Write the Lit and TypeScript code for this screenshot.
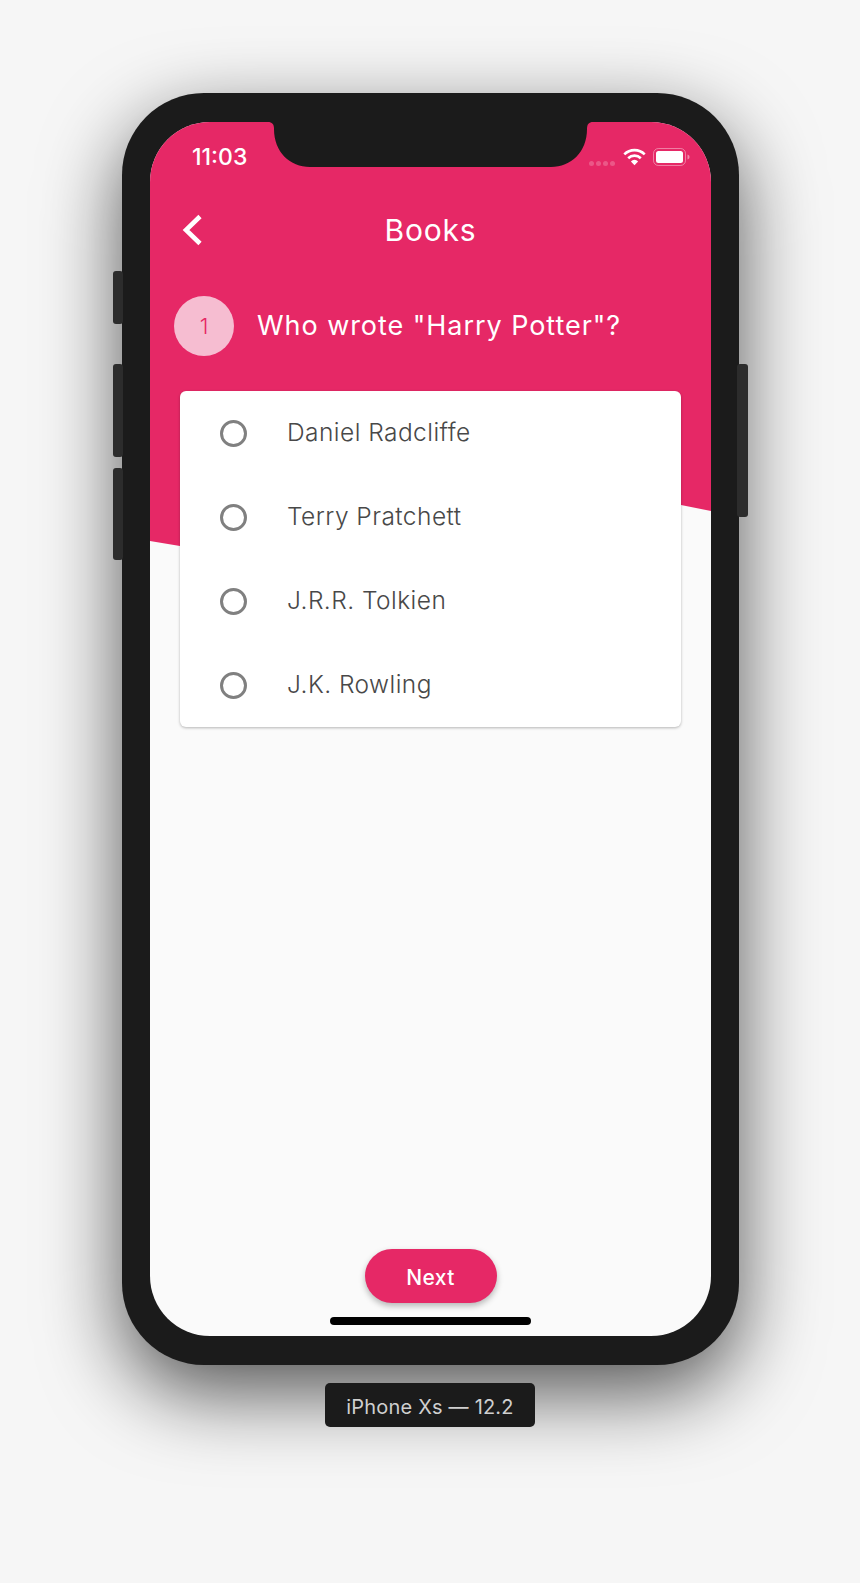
import { LitElement, html, css } from "lit";
import { customElement, state } from "lit/decorators.js";

const OPTIONS = ["Daniel Radcliffe", "Terry Pratchett", "J.R.R. Tolkien", "J.K. Rowling"];

@customElement("app-root")
export class AppRoot extends LitElement {
  @state() private selected = -1;

  static styles = css`
    :host {
      display: block;
      width: 860px;
      height: 1583px;
      background: #f6f6f6;
      overflow: hidden;
      font-family: Inter, "Liberation Sans", sans-serif;
    }
    .page {
      display: flex;
      flex-direction: column;
      align-items: flex-start;
      padding-top: 93px;
    }
    .phone {
      position: relative;
      box-sizing: border-box;
      width: 617px;
      height: 1272px;
      margin-left: 122px;
      padding: 29px 28px;
      background: #1b1b1b;
      border-radius: 82px;
      box-shadow: 0 28px 80px rgba(0, 0, 0, 0.66);
    }
    .side {
      position: absolute;
      background: #2c2c2c;
      border-radius: 3px;
    }
    .side.l { left: -9px; width: 10px; }
    .side.r { right: -9px; width: 11px; top: 271px; height: 153px; }
    .s1 { top: 178px; height: 53px; }
    .s2 { top: 271px; height: 93px; }
    .s3 { top: 375px; height: 92px; }

    .screen {
      position: relative;
      height: 1214px;
      display: flex;
      flex-direction: column;
      overflow: hidden;
      background: #fafafa;
      border-radius: 60px;
    }
    .wave {
      position: absolute;
      inset: 0 0 auto 0;
      height: 430px;
      background: #e62866;
      clip-path: polygon(0 0, 100% 0, 100% 389px, 531px 383px, 30px 424px, 0 419px);
    }
    .notch {
      position: absolute;
      top: 0;
      left: 118px;
      display: block;
    }
    .status, .appbar, .question, .card, .spacer, .next, .home {
      position: relative;
    }
    .status {
      height: 70px;
      display: flex;
      align-items: center;
      justify-content: space-between;
      padding: 0 21px 0 42px;
      color: #fff;
      font-size: 23px;
      font-weight: 500;
    }
    .icons {
      display: flex;
      align-items: center;
      gap: 7px;
    }
    .dots {
      display: flex;
      gap: 2px;
      margin-top: 12px;
      margin-right: 1px;
    }
    .dots i {
      width: 5px;
      height: 5px;
      border-radius: 50%;
      background: rgba(255, 255, 255, 0.22);
    }
    .icons svg { display: block; }

    .appbar {
      height: 76px;
      display: flex;
      align-items: center;
      justify-content: center;
      color: #fff;
      font-size: 30px;
      font-weight: 400;
      letter-spacing: 0.8px;
    }
    .back {
      position: absolute;
      left: 31px;
      top: 22px;
      display: block;
    }
    .question {
      display: flex;
      align-items: center;
      gap: 23px;
      margin-top: 28px;
      padding-left: 24px;
      color: #fff;
      font-size: 27px;
      font-weight: 400;
      letter-spacing: 0.95px;
    }
    .question span { margin-top: -2px; }
    .badge {
      flex: none;
      width: 60px;
      height: 60px;
      display: flex;
      align-items: center;
      justify-content: center;
      border-radius: 50%;
      background: #f6bdd1;
      color: #e62866;
      font-size: 22px;
      font-weight: 300;
      letter-spacing: 0;
    }
    .card {
      margin: 35px 30px 0;
      background: #fff;
      border-radius: 6px;
      box-shadow: 0 1px 3px rgba(0, 0, 0, 0.28);
    }
    .row {
      height: 84px;
      display: flex;
      align-items: center;
      gap: 40px;
      padding-left: 40px;
      color: #484848;
      font-size: 24.5px;
      font-weight: 350;
      letter-spacing: 0.45px;
      cursor: pointer;
    }
    .row span { margin-top: -2px; }
    .radio {
      flex: none;
      box-sizing: border-box;
      width: 27px;
      height: 27px;
      border: 3px solid #808080;
      border-radius: 50%;
    }
    .row.on .radio {
      border-color: #e62866;
      box-shadow: inset 0 0 0 4px #fff;
      background: #e62866;
    }
    .spacer { flex: 1; }
    .next {
      align-self: center;
      width: 132px;
      height: 54px;
      padding: 3px 0 0;
      border: none;
      border-radius: 27px;
      background: #e62866;
      color: #fff;
      font-family: inherit;
      font-size: 21px;
      font-weight: 500;
      letter-spacing: 0.4px;
      box-shadow: 0 3px 6px rgba(0, 0, 0, 0.28);
    }
    .home {
      align-self: center;
      width: 201px;
      height: 8px;
      margin: 14px 0 11px;
      background: #000;
      border-radius: 4px;
    }
    .label {
      position: relative;
      box-sizing: border-box;
      width: 210px;
      height: 44px;
      margin: 18px 0 0 325px;
      padding-top: 3px;
      display: flex;
      align-items: center;
      justify-content: center;
      background: #1b1b1b;
      border-radius: 5px;
      color: #cfcfcf;
      font-size: 20px;
      letter-spacing: 0.2px;
    }
  `;

  render() {
    return html`
      <div class="page">
        <div class="phone">
          <div class="side l s1"></div>
          <div class="side l s2"></div>
          <div class="side l s3"></div>
          <div class="side r"></div>
          <div class="screen">
            <div class="wave"></div>
            <svg class="notch" width="325" height="45" viewBox="0 0 325 45">
              <path fill="#1b1b1b" d="M0 0C4 0 6 2 6 7C6 30 22 45 42 45H283C303 45 319 30 319 7C319 2 321 0 325 0Z" />
            </svg>
            <div class="status">
              <span>11:03</span>
              <div class="icons">
                <div class="dots"><i></i><i></i><i></i><i></i></div>
                <svg width="23" height="18" viewBox="0 0 23 18">
                  <g fill="none" stroke="#fff" stroke-width="2.6">
                    <path d="M1.3 6.3A14.5 14.5 0 0 1 21.7 6.3" />
                    <path d="M5.2 10.2A9 9 0 0 1 17.8 10.2" />
                  </g>
                  <path fill="#fff" d="M7.9 13.4A5 5 0 0 1 15.1 13.4L11.5 17.2Z" />
                </svg>
                <svg width="37" height="18" viewBox="0 0 37 18">
                  <rect x="0.5" y="0.5" width="32" height="17" rx="5" fill="none" stroke="#fff" stroke-opacity="0.4" />
                  <rect x="3" y="3" width="27" height="12" rx="2.5" fill="#fff" />
                  <path fill="#fff" fill-opacity="0.45" d="M34.5 6.5C36 7 36.5 8 36.5 9C36.5 10 36 11 34.5 11.500Z" />
                </svg>
              </div>
            </div>
            <div class="appbar">
              <svg class="back" width="24" height="32" viewBox="0 0 24 32">
                <path fill="none" stroke="#fff" stroke-width="4.6" d="M19 2.500L5 16L19 29.500" />
              </svg>
              Books
            </div>
            <div class="question">
              <div class="badge">1</div>
              <span>Who wrote "Harry Potter"?</span>
            </div>
            <div class="card">
              ${OPTIONS.map(
                (o, i) => html`
                  <div class="row ${this.selected === i ? "on" : ""}" @click=${() => (this.selected = i)}>
                    <div class="radio"></div>
                    <span>${o}</span>
                  </div>
                `
              )}
            </div>
            <div class="spacer"></div>
            <button class="next">Next</button>
            <div class="home"></div>
          </div>
        </div>
        <div class="label">iPhone Xs — 12.2</div>
      </div>
    `;
  }
}
